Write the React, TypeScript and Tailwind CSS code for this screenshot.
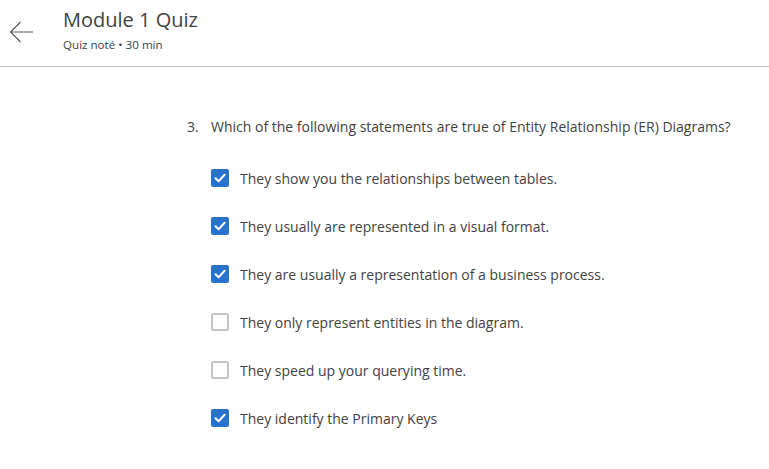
import React from 'react';

const options = [
  { text: 'They show you the relationships between tables.', checked: true },
  { text: 'They usually are represented in a visual format.', checked: true },
  { text: 'They are usually a representation of a business process.', checked: true },
  { text: 'They only represent entities in the diagram.', checked: false },
  { text: 'They speed up your querying time.', checked: false },
  { text: 'They identify the Primary Keys', checked: true },
];

const Checkbox: React.FC<{ checked: boolean }> = ({ checked }) =>
  checked ? (
    <span className="flex h-[18px] w-[18px] shrink-0 items-center justify-center rounded-[2px] bg-[#2a73cc]">
      <svg width="14" height="14" viewBox="0 0 14 14" fill="none">
        <path d="M2.5 7.2 L5.6 10.2 L11.6 3.8" stroke="white" strokeWidth="2" strokeLinecap="round" strokeLinejoin="round" />
      </svg>
    </span>
  ) : (
    <span className="block h-[18px] w-[18px] shrink-0 rounded-[2px] border-2 border-[#c4c4c4] bg-white" />
  );

export default function App() {
  return (
    <div className="h-[469px] w-[769px] overflow-hidden bg-white text-[#424242]" style={{ fontFamily: '"Open Sans", sans-serif' }}>
      <header className="flex h-[67px] items-start border-b border-[#bdbdbd]">
        <button className="ml-[9px] mt-[21px] text-[#5a5a5a]">
          <svg width="25" height="22" viewBox="0 0 25 22" fill="none">
            <path d="M24 11 H1.5 M11.5 1 L1.5 11 L11.5 21" stroke="currentColor" strokeWidth="1.2" />
          </svg>
        </button>
        <div className="ml-[29px] mt-[7px]">
          <h1 className="text-[20px] leading-[26px] text-[#424242]">Module 1 Quiz</h1>
          <p className="mt-[4px] text-[11.6px] leading-[15px] text-[#424242]">Quiz noté • 30 min</p>
        </div>
      </header>
      <main className="pl-[187px] pt-[50px]">
        <div className="flex text-[14px] leading-[20px]">
          <span className="w-[24px]">3.</span>
          <span>Which of the following statements are true of Entity Relationship (ER) Diagrams?</span>
        </div>
        <ul className="ml-[24px] mt-[32px] flex flex-col gap-[30px]">
          {options.map((o) => (
            <li key={o.text} className="flex h-[18px] items-center text-[14px]">
              <Checkbox checked={o.checked} />
              <span className="ml-[11px]">{o.text}</span>
            </li>
          ))}
        </ul>
      </main>
    </div>
  );
}
